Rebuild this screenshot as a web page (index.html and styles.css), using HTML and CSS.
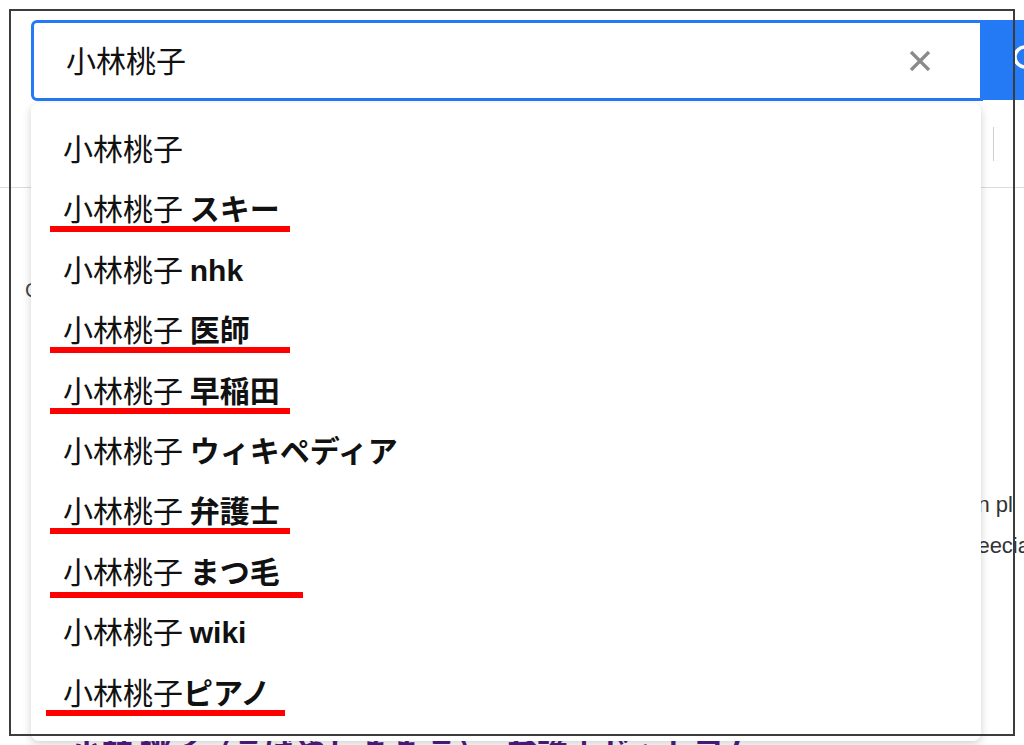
FILE: index.html
```html
<!DOCTYPE html>
<html lang="ja">
<head>
<meta charset="utf-8">
<link rel="stylesheet" href="styles.css">
</head>
<body>
<div class="page">
  <header class="header">
    <div class="search-row">
      <div class="search-box">
        <span class="query">小林桃子</span>
        <svg class="clear" width="24" height="24" viewBox="0 0 24 24"><path d="M3 3 L21 21 M21 3 L3 21" stroke="#8a8a8a" stroke-width="3.2" fill="none" stroke-linecap="butt"/></svg>
      </div>
      <button class="search-btn" type="button">
        <svg width="40" height="40" viewBox="0 0 40 40"><circle cx="18" cy="17" r="10" stroke="#fff" stroke-width="3.5" fill="none"/><path d="M25 24 L34 33" stroke="#fff" stroke-width="4" stroke-linecap="round"/></svg>
      </button>
    </div>
    <nav class="tabs">
      <span class="tab">すべて</span>
      <span class="tab-divider"></span>
    </nav>
  </header>
  <main class="results">
    <p class="result-meta">Cookie を使用しています</p>
    <div class="snippet">
      <div class="snippet-line first">Momoko Kobayashi is a lawyer who works in pl</div>
      <div class="snippet-line second">and has a particular interest in speecia</div>
    </div>
    <h3 class="result-title">小林 桃子（こばやし ももこ）- 弁護士ドットコム</h3>
  </main>

  <ul class="suggestions">
    <li class="item">小林桃子</li>
    <li class="item">小林桃子 <b>スキー</b><span class="mark"></span></li>
    <li class="item">小林桃子 <b>nhk</b></li>
    <li class="item">小林桃子 <b>医師</b><span class="mark"></span></li>
    <li class="item">小林桃子 <b>早稲田</b><span class="mark"></span></li>
    <li class="item">小林桃子 <b>ウィキペディア</b></li>
    <li class="item">小林桃子 <b>弁護士</b><span class="mark"></span></li>
    <li class="item">小林桃子 <b>まつ毛</b><span class="mark long"></span></li>
    <li class="item">小林桃子 <b>wiki</b></li>
    <li class="item">小林桃子<b>ピアノ</b><span class="mark shift"></span></li>
  </ul>

  <div class="frame"></div>
</div>
</body>
</html>
```

FILE: styles.css
```css
* { box-sizing: border-box; }

html, body {
  margin: 0;
  padding: 0;
  background: #fff;
}

body {
  font-family: "Liberation Sans", "Noto Sans CJK JP", sans-serif;
  color: #111;
}

.page {
  position: relative;
  width: 1024px;
  height: 745px;
  overflow: hidden;
}

.header {
  border-bottom: 1px solid #dcdcdc;
  height: 188px;
}

.search-row {
  display: flex;
  padding: 20px 0 0 31px;
  height: 101px;
}

.search-box {
  flex: none;
  width: 952px;
  height: 81px;
  border: 3px solid #2479f4;
  border-radius: 6px 0 0 6px;
  display: flex;
  align-items: center;
  padding: 0 0 4px 32px;
}

.query {
  flex: 1;
  font-size: 30px;
  font-family: "Noto Sans CJK JP", sans-serif;
  color: #111;
}

.clear {
  margin-right: 48px;
  margin-top: 4px;
}

.search-btn {
  flex: none;
  width: 90px;
  height: 80px;
  background: #2479f4;
  border: none;
  padding: 0 0 0 24px;
  display: flex;
  align-items: center;
}

.tabs {
  display: flex;
  justify-content: flex-end;
  align-items: center;
  height: 86px;
  padding-right: 30px;
}

.tab {
  font-size: 16px;
  color: #555;
  margin-right: 16px;
}

.tab-divider {
  width: 1px;
  height: 34px;
  background: #cfcfcf;
}

.results {
  padding: 0 0 0 25px;
}

.result-meta {
  margin: 89px 0 0;
  font-size: 20px;
  line-height: 26px;
  color: #444;
}

.snippet {
  margin-top: 181px;
}

.snippet-line {
  white-space: nowrap;
  font-size: 22px;
  line-height: 41px;
  color: #333;
  text-align: right;
}

.snippet-line.first { padding-right: 11px; }
.snippet-line.second { margin-right: -6px; }

.result-title {
  margin: 160px 0 0 46px;
  font-family: "Noto Sans CJK JP", sans-serif;
  font-size: 31px;
  font-weight: 700;
  color: #4d1d86;
  white-space: nowrap;
}

.suggestions {
  position: absolute;
  left: 31px;
  top: 103px;
  width: 950px;
  height: 638px;
  margin: 0;
  padding: 14px 0 0;
  list-style: none;
  background: #fff;
  border-radius: 8px;
  box-shadow: 0 3px 10px rgba(0, 0, 0, 0.18);
}

.item {
  position: relative;
  height: 60.4px;
  line-height: 60.4px;
  padding-left: 32px;
  font-size: 30px;
  font-family: "Noto Sans CJK JP", sans-serif;
  color: #111;
  white-space: nowrap;
}

.item b {
  font-weight: 700;
  font-family: "Liberation Sans", "Noto Sans CJK JP", sans-serif;
}

.mark {
  position: absolute;
  left: 19px;
  top: 49px;
  width: 240px;
  height: 6px;
  background: #ff0000;
}

.mark.long { width: 253px; top: 52px; }
.mark.shift { left: 15px; width: 239px; }

.frame {
  position: absolute;
  left: 9px;
  top: 9px;
  width: 1006px;
  height: 727px;
  border: 2px solid #3c3c3c;
  pointer-events: none;
}
```
